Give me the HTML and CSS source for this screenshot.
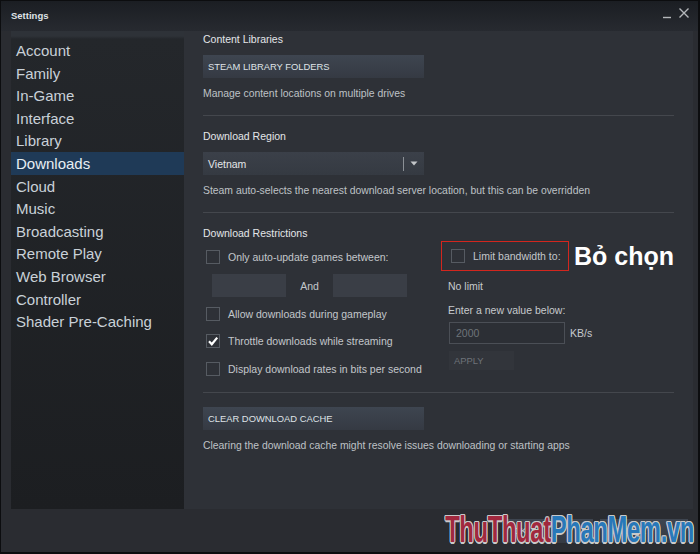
FILE: index.html
```html
<!DOCTYPE html>
<html lang="en">
<head>
  <meta charset="UTF-8">
  <meta name="viewport" content="width=device-width, initial-scale=1.0">
  <title>Settings</title>
  <link rel="stylesheet" href="styles.css">
</head>
<body>
  <div class="window">
    <!-- thanh tiêu đề -->
    <div class="titlebar">
      <span class="title">Settings</span>
      <div class="win-buttons">
        <svg class="win-min" width="10" height="12" viewBox="0 0 10 12"><path d="M1 10.5H9" stroke="#b4b7ba" stroke-width="1.4"/></svg>
        <svg class="win-close" width="12" height="12" viewBox="0 0 12 12"><path d="M1.5 1.5L10.5 10.5M10.5 1.5L1.5 10.5" stroke="#b4b7ba" stroke-width="1.4"/></svg>
      </div>
    </div>

    <div class="body">
      <!-- menu bên trái -->
      <ul class="nav">
        <li>Account</li>
        <li>Family</li>
        <li>In-Game</li>
        <li>Interface</li>
        <li>Library</li>
        <li class="active">Downloads</li>
        <li>Cloud</li>
        <li>Music</li>
        <li>Broadcasting</li>
        <li>Remote Play</li>
        <li>Web Browser</li>
        <li>Controller</li>
        <li>Shader Pre-Caching</li>
      </ul>

      <!-- nội dung -->
      <div class="main">
        <div class="heading first">Content Libraries</div>
        <div class="btn wide">STEAM LIBRARY FOLDERS</div>
        <div class="desc">Manage content locations on multiple drives</div>
        <div class="sep"></div>

        <div class="heading">Download Region</div>
        <div class="dropdown">
          <span class="dropdown-value">Vietnam</span>
          <span class="dropdown-split"></span>
          <svg class="dropdown-arrow" width="8" height="5" viewBox="0 0 8 5"><path d="M0.5 0.5H7.5L4 4.5Z" fill="#c3c6c9"/></svg>
        </div>
        <div class="desc">Steam auto-selects the nearest download server location, but this can be overridden</div>
        <div class="sep"></div>

        <div class="heading">Download Restrictions</div>
        <div class="restrict">
          <div class="col-left">
            <div class="check-row">
              <span class="checkbox"></span>
              <span class="check-label">Only auto-update games between:</span>
            </div>
            <div class="time-row">
              <span class="field"></span>
              <span class="and">And</span>
              <span class="field"></span>
            </div>
            <div class="check-row">
              <span class="checkbox"></span>
              <span class="check-label">Allow downloads during gameplay</span>
            </div>
            <div class="check-row">
              <span class="checkbox">
                <svg width="12" height="12" viewBox="0 0 12 12"><path d="M2 6.3L4.8 9.3L10.2 2.6" fill="none" stroke="#fff" stroke-width="2.2"/></svg>
              </span>
              <span class="check-label">Throttle downloads while streaming</span>
            </div>
            <div class="check-row last">
              <span class="checkbox"></span>
              <span class="check-label">Display download rates in bits per second</span>
            </div>
          </div>

          <div class="col-right">
            <div class="limit-line">
              <div class="limit-box">
                <span class="checkbox"></span>
                <span class="check-label">Limit bandwidth to:</span>
              </div>
              <span class="note">Bỏ chọn</span>
            </div>
            <div class="plain no-limit">No limit</div>
            <div class="plain enter">Enter a new value below:</div>
            <div class="rate-row">
              <span class="rate-input">2000</span>
              <span class="plain unit">KB/s</span>
            </div>
            <div class="apply">APPLY</div>
          </div>
        </div>
        <div class="sep"></div>

        <div class="btn wide cache">CLEAR DOWNLOAD CACHE</div>
        <div class="desc">Clearing the download cache might resolve issues downloading or starting apps</div>
      </div>
    </div>

    <div class="footer">
      <div class="btn small">OK</div>
      <div class="btn small">CANCEL</div>
    </div>

    <div class="watermark"><span class="wm-red">ThuThuat</span><span class="wm-blue">PhanMem.vn</span></div>
  </div>
</body>
</html>
```

FILE: styles.css
```css
body {
  margin: 0;
  padding: 0;
  background-color: #0c0d0f;
  font-family: "Liberation Sans", Arial, "DejaVu Sans", sans-serif;
}
.window {
  position: relative;
  width: 700px;
  height: 554px;
  box-sizing: border-box;
  border: 1px solid #0c0d0f;
  border-right-width: 2px;
  border-bottom-width: 2px;
  background-color: #2a2c31;
  display: flex;
  flex-direction: column;
  overflow: hidden;
}

/* thanh tiêu đề */
.titlebar {
  height: 30px;
  flex: none;
  display: flex;
  align-items: center;
  justify-content: space-between;
  padding: 0 8px 0 10px;
  background: linear-gradient(to bottom, #1b1e23, #272a30);
}
.title {
  font-size: 9.5px;
  font-weight: bold;
  color: #dfe2e5;
  margin-top: -2px;
}
.win-buttons {
  display: flex;
  align-items: center;
  gap: 6px;
  margin-top: -7px;
}

/* phần thân */
.body {
  height: 478px;
  flex: none;
  display: flex;
  padding: 0 10px;
}
.nav {
  list-style: none;
  margin: 0;
  padding: 8px 0 0;
  width: 173px;
  flex: none;
  background: linear-gradient(to bottom, #2e3238 0, #2e3238 5px, #24272b 8px, #1c1e21 100%);
}
.nav li {
  height: 22.6px;
  line-height: 23px;
  padding-left: 5px;
  font-size: 15px;
  color: #c9d1d8;
  white-space: nowrap;
}
.nav li.active {
  background-color: #1f3a57;
  color: #e8eef3;
}

.main {
  flex: 1;
  padding: 0 19px;
  background-color: #2e3137;
  font-size: 10.5px;
}
.heading {
  line-height: 16px;
  margin-top: 12px;
  color: #e3e6e9;
}
.heading.first {
  margin-top: 0;
}
.desc {
  line-height: 16px;
  margin-top: 8px;
  font-size: 10.4px;
  color: #bec2c6;
  white-space: nowrap;
}
.sep {
  height: 1px;
  margin-top: 13px;
  background-color: #44474d;
}
.btn {
  box-sizing: border-box;
  background: linear-gradient(to bottom, #3e4550, #353a43);
  color: #dfe3e7;
  font-size: 9.4px;
  white-space: nowrap;
}
.btn.wide {
  width: 221px;
  height: 23px;
  line-height: 23px;
  padding-left: 5px;
  margin-top: 8px;
}
.btn.cache {
  margin-top: 14px;
}

.dropdown {
  position: relative;
  width: 221px;
  height: 23px;
  margin-top: 8px;
  display: flex;
  align-items: center;
  background: linear-gradient(to bottom, #3b4049, #353a42);
}
.dropdown-value {
  flex: 1;
  padding-left: 5px;
  color: #e3e6e9;
}
.dropdown-split {
  width: 1px;
  height: 14px;
  background-color: #8b9096;
  margin-right: 6px;
}
.dropdown-arrow {
  margin-right: 6px;
}

/* giới hạn tải */
.restrict {
  display: flex;
}
.col-left {
  width: 238px;
  flex: none;
  padding-top: 6px;
}
.check-row {
  display: flex;
  align-items: center;
  height: 20px;
  margin-top: 7px;
  padding-left: 3px;
}
.check-row:first-child {
  margin-top: 0;
}
.check-row.last {
  margin-top: 8px;
}
.checkbox {
  width: 14px;
  height: 14px;
  box-sizing: border-box;
  border: 1px solid #565b62;
  flex: none;
  display: flex;
  align-items: center;
  justify-content: center;
}
.check-label {
  margin-left: 8px;
  color: #c3c7cb;
  white-space: nowrap;
}
.time-row {
  display: flex;
  align-items: center;
  margin-top: 7px;
  padding-left: 9px;
}
.field {
  width: 74px;
  height: 23px;
  background-color: #3a3e46;
}
.and {
  width: 47px;
  text-align: center;
  color: #c3c7cb;
}

.col-right {
  flex: 1;
}
.limit-line {
  display: flex;
  align-items: center;
}
.limit-box {
  box-sizing: border-box;
  width: 128px;
  height: 30px;
  border: 1px solid #d3261e;
  display: flex;
  align-items: center;
  padding-left: 9px;
}
.note {
  margin-left: 5px;
  font-size: 25px;
  font-weight: bold;
  color: #ffffff;
  white-space: nowrap;
}
.plain {
  line-height: 16px;
  color: #c6cacd;
}
.no-limit {
  margin: 7px 0 0 7px;
}
.enter {
  margin: 8px 0 0 7px;
}
.rate-row {
  display: flex;
  align-items: center;
  margin: 4px 0 0 8px;
}
.rate-input {
  box-sizing: border-box;
  width: 116px;
  height: 22px;
  line-height: 20px;
  padding-left: 6px;
  border: 1px solid #4b4f56;
  background-color: #2c2f35;
  color: #6e7379;
}
.unit {
  margin-left: 5px;
}
.apply {
  width: 65px;
  height: 19px;
  line-height: 19px;
  margin: 7px 0 0 8px;
  padding-left: 5px;
  box-sizing: border-box;
  background-color: #32353b;
  color: #6e7379;
  font-size: 9.4px;
}

/* nút dưới */
.footer {
  flex: 1;
  display: flex;
  justify-content: flex-end;
  align-items: flex-start;
  gap: 7px;
  padding: 10px 10px 0 0;
}
.btn.small {
  width: 88px;
  height: 24px;
  line-height: 24px;
  padding-left: 8px;
}

.watermark {
  position: absolute;
  right: 4px;
  bottom: 1px;
  font-size: 36px;
  font-weight: bold;
  letter-spacing: -0.5px;
  transform: scaleX(0.66);
  transform-origin: right bottom;
  white-space: nowrap;
  text-shadow: 1.5px 0 0 #c9c9c9, -1.5px 0 0 #c9c9c9, 0 1.5px 0 #c9c9c9, 0 -1.5px 0 #c9c9c9,
    1px 1px 0 #c9c9c9, -1px -1px 0 #c9c9c9, 1px -1px 0 #c9c9c9, -1px 1px 0 #c9c9c9;
}
.wm-red {
  color: #a1283e;
}
.wm-blue {
  color: #2878b9;
}
```
